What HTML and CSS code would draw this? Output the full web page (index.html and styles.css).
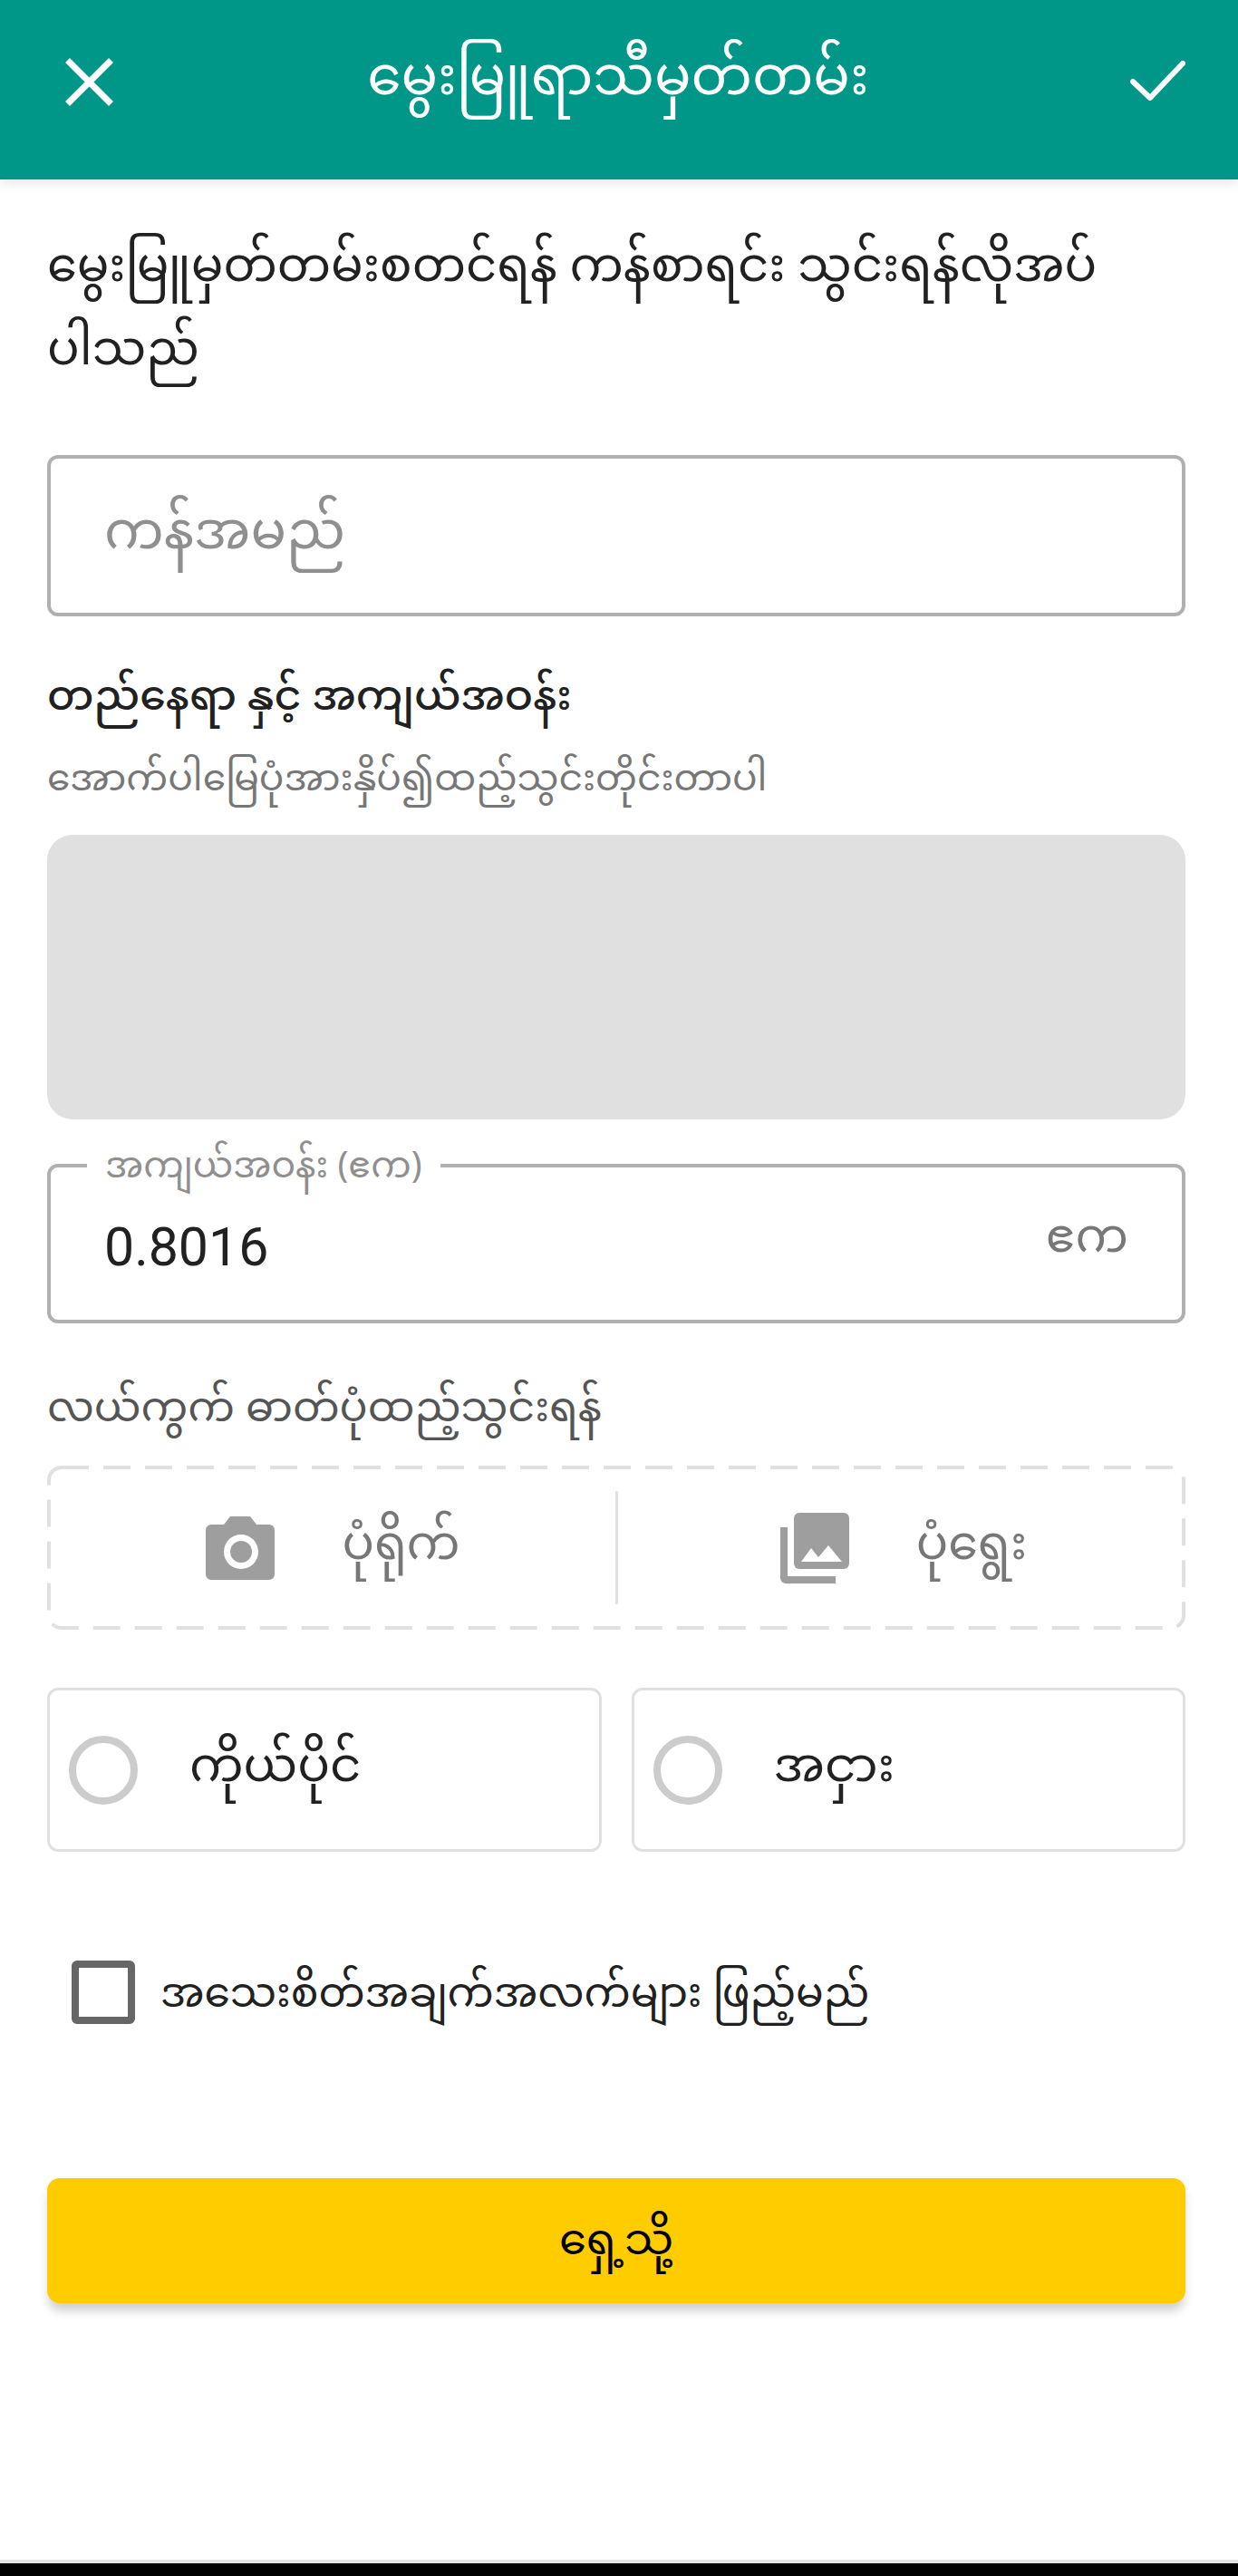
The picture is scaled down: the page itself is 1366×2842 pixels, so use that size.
FILE: index.html
```html
<!DOCTYPE html>
<html lang="my">
<head>
    <meta charset="UTF-8">
    <meta name="viewport" content="width=device-width, initial-scale=1.0">
    <title>မွေးမြူရာသီမှတ်တမ်း</title>
    <link rel="stylesheet" href="styles.css">
</head>
<body>
    <header class="topbar">
        <svg class="icon-close" viewBox="0 0 60 60"><path d="M6.500 6.500 54.500 54.500M54.500 6.500 6.500 54.500"/></svg>
        <h1>မွေးမြူရာသီမှတ်တမ်း</h1>
        <svg class="icon-done" viewBox="0 0 66 50"><path d="M6 25 25 43 61 5"/></svg>
    </header>

    <main class="form">
        <p class="intro">မွေးမြူမှတ်တမ်းစတင်ရန် ကန်စာရင်း သွင်းရန်လိုအပ်<br>ပါသည်</p>

        <div class="field name-field">
            <input type="text" class="text-input" placeholder="ကန်အမည်">
        </div>

        <h2 class="label-strong">တည်နေရာ နှင့် အကျယ်အဝန်း</h2>
        <p class="hint">အောက်ပါမြေပုံအားနှိပ်၍ထည့်သွင်းတိုင်းတာပါ</p>
        <div class="map-box"></div>

        <fieldset class="field area-field">
            <legend>အကျယ်အဝန်း (ဧက)</legend>
            <div class="area-row">
                <span class="area-value">0.8016</span>
                <span class="area-unit">ဧက</span>
            </div>
        </fieldset>

        <h2 class="label-photo">လယ်ကွက် ဓာတ်ပုံထည့်သွင်းရန်</h2>
        <div class="photo-box">
            <svg class="dash-frame" viewBox="0 0 1256 181"><rect x="2" y="2" width="1252" height="177" rx="14"/></svg>
            <div class="photo-btn">
                <svg class="icon-camera" viewBox="0 0 76 70"><path d="M27 0h22l7 9h14a6 6 0 0 1 6 6v49a6 6 0 0 1-6 6H6a6 6 0 0 1-6-6V15a6 6 0 0 1 6-6h14z"/><circle cx="39" cy="39" r="19" class="cut"/><circle cx="39" cy="39" r="12"/></svg>
                <span>ပုံရိုက်</span>
            </div>
            <div class="photo-btn photo-right">
                <svg class="icon-gallery" viewBox="0 0 76 78"><rect x="15" y="0" width="61" height="62" rx="6"/><path d="M0 16h8v54h53v8H6a6 6 0 0 1-6-6z"/><path d="M23 54 34 39l8 10 11-13 15 18z" class="cut"/></svg>
                <span>ပုံရွေး</span>
            </div>
        </div>

        <div class="owner-row">
            <div class="owner-card"><span class="radio"></span><span>ကိုယ်ပိုင်</span></div>
            <div class="owner-card"><span class="radio"></span><span>အငှား</span></div>
        </div>

        <div class="check-row">
            <span class="checkbox"></span>
            <span class="check-text">အသေးစိတ်အချက်အလက်များ ဖြည့်မည်</span>
        </div>

        <button class="btn"><span class="btn-text">ရှေ့သို့</span></button>
    </main>

    <div class="nav-strip"></div>
</body>
</html>
```

FILE: styles.css
```css
* {
    box-sizing: border-box;
}

body {
    margin: 0;
    height: 2842px;
    background-color: #fff;
    color: #212121;
    font-family: "Noto Sans Myanmar", "Padauk", "Myanmar Text", "Noto Sans", Roboto, sans-serif;
    display: flex;
    flex-direction: column;
}

.topbar {
    height: 198px;
    flex-shrink: 0;
    background-color: #009688;
    color: #fff;
    display: flex;
    justify-content: space-between;
    align-items: center;
    padding: 0 56px 18px 68px;
    box-shadow: 0 4px 12px rgba(0, 0, 0, .1);
}

.topbar h1 {
    margin: 0 8px 0 0;
    font-size: 60px;
    font-weight: 400;
}

.icon-close,
.icon-done {
    fill: none;
    stroke: #fff;
}

.icon-close {
    width: 60px;
    height: 60px;
    stroke-width: 7;
}

.icon-done {
    width: 66px;
    height: 50px;
    stroke-width: 6;
    stroke-linecap: round;
    stroke-linejoin: round;
}

.form {
    flex: 1;
    padding: 0 58px 0 52px;
    display: flex;
    flex-direction: column;
}

.intro {
    margin: 54px 0 0;
    font-size: 52.800px;
    line-height: 92px;
    height: 184px;
}

.field {
    border: 4px solid #b0b0b0;
    border-radius: 12px;
    margin: 0;
}

.name-field {
    margin-top: 66px;
    height: 178px;
}

.text-input {
    width: 100%;
    height: 100%;
    border: none;
    background: none;
    outline: none;
    padding: 0 59px;
    font-family: inherit;
    font-size: 58.500px;
}

.text-input::placeholder {
    color: #8f8f8f;
}

.label-strong {
    margin: 60px 0 0;
    font-size: 46px;
    font-weight: 500;
    line-height: 66px;
}

.hint {
    margin: 28px 0 0;
    font-size: 40.800px;
    line-height: 58px;
    color: #777;
}

.map-box {
    margin-top: 29px;
    height: 314px;
    background-color: #e0e0e0;
    border-radius: 28px;
}

.area-field {
    margin-top: 31px;
    height: 194px;
    padding: 0 59px;
}

.area-field legend {
    margin-left: -19px;
    padding: 8px 20px 0;
    font-size: 39.500px;
    line-height: 32px;
    color: #8f8f8f;
}

.area-row {
    height: 138px;
    display: flex;
    justify-content: space-between;
    align-items: center;
}

.area-value {
    font-family: Roboto, sans-serif;
    font-size: 59px;
}

.area-unit {
    margin-bottom: 12px;
    font-size: 52px;
    color: #777;
}

.label-photo {
    margin: 58px 0 0;
    font-size: 46px;
    font-weight: 400;
    line-height: 80px;
    color: #555;
}

.photo-box {
    position: relative;
    margin-top: 19px;
    height: 181px;
    padding: 0 4px;
    display: grid;
    grid-template-columns: 623px 1fr;
    align-items: center;
}

.dash-frame {
    position: absolute;
    top: 0;
    left: 0;
    width: 100%;
    height: 100%;
    fill: none;
    stroke: #e0e0e0;
    stroke-width: 4;
    stroke-dasharray: 30 16;
}

.photo-btn {
    height: 125px;
    display: flex;
    justify-content: center;
    align-items: center;
    gap: 74px;
    font-size: 52.500px;
    color: #777;
}

.photo-right {
    border-left: 3px solid #e0e0e0;
    padding-left: 8px;
}

.icon-camera,
.icon-gallery {
    fill: #9e9e9e;
}

.icon-camera {
    width: 76px;
    height: 70px;
}

.icon-gallery {
    width: 76px;
    height: 78px;
}

.cut {
    fill: #fff;
}

.owner-row {
    margin-top: 64px;
    display: flex;
    gap: 33px;
}

.owner-card {
    flex: 1;
    height: 181px;
    border: 3px solid #e0e0e0;
    border-radius: 12px;
    padding-left: 21px;
    display: flex;
    align-items: center;
    gap: 57px;
    font-size: 53px;
}

.radio {
    width: 76px;
    height: 76px;
    border: 8px solid #ccc;
    border-radius: 50%;
}

.check-row {
    margin-top: 120px;
    height: 70px;
    padding-left: 27px;
    display: flex;
    align-items: center;
    gap: 28px;
    font-size: 45.500px;
}

.check-text {
    margin-top: 10px;
}

.checkbox {
    width: 70px;
    height: 70px;
    border: 8px solid #666;
    border-radius: 6px;
}

.btn {
    margin-top: 170px;
    height: 138px;
    border: none;
    border-radius: 14px;
    background-color: #fc0;
    color: #000;
    font-family: inherit;
    font-size: 48px;
    box-shadow: 0 10px 12px -2px rgba(0, 0, 0, .2);
}

.btn-text {
    display: block;
    margin-top: 6px;
}

.nav-strip {
    height: 18px;
    flex-shrink: 0;
    background-color: #000;
    border-top: 4px solid #e2e2e2;
}
```
